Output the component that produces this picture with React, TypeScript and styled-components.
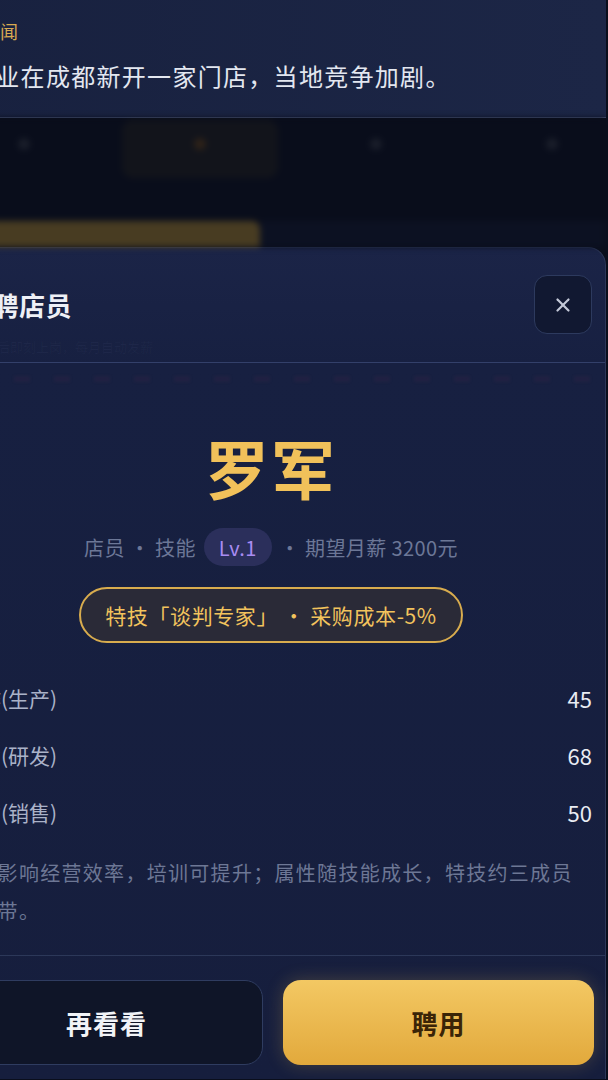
import React from 'react';
import styled, { createGlobalStyle } from 'styled-components';
import { X } from 'lucide-react';

// bottom sheet "招聘店员" over the dimmed game screen
// the phone screenshot is cropped on the left, so the stage is pulled out of view

const Global = createGlobalStyle`
    html, body {
        margin: 0;
        padding: 0;
        background: #0a0e1c;
    }
    body {
        font-family: 'Noto Sans CJK SC', 'Noto Sans', sans-serif;
        -webkit-font-smoothing: antialiased;
    }
`

const Screen = styled.div`
    width: 608px;
    height: 1080px;
    overflow: hidden;
    background: #0a0e1c;
`

const Stage = styled.div`
    margin-left: -64px;
    width: 670px;
`

const News = styled.section`
    height: 118px;
    box-sizing: border-box;
    padding: 20px 0 0 34px;
    background: linear-gradient(90deg, #18213f 0%, #1c2646 100%);
    border-bottom: 1px solid #4a5679;
`

const NewsTag = styled.div`
    margin-left: 12px;
    font-size: 18px;
    line-height: 22px;
    color: #d8aa52;
`

const NewsText = styled.p`
    margin: 20px 0 0;
    font-size: 24px;
    line-height: 28px;
    letter-spacing: 1.3px;
    color: #e3e7f0;
    white-space: nowrap;
`

const Backdrop = styled.div`
    height: 129px;
    box-sizing: border-box;
    padding-top: 2px;
    display: flex;
    flex-direction: column;
    justify-content: space-between;
    background: #090d1b;
    filter: blur(3px);
`

const TabRow = styled.div`
    display: grid;
    grid-template-columns: repeat(4, 176px);
    height: 58px;
`

const Tab = styled.div<{ $active?: boolean }>`
    display: flex;
    align-items: flex-start;
    justify-content: center;
    padding-top: 18px;
    border-radius: 10px;
    background: ${p => (p.$active ? '#12141b' : 'transparent')};
    margin: 0 ${p => (p.$active ? '10px' : '0')};
`

const TabDot = styled.span<{ $warm?: boolean }>`
    width: 12px;
    height: 12px;
    border-radius: 50%;
    background: ${p => (p.$warm ? '#2e2219' : '#1a1e2a')};
`

const BottomRow = styled.div`
    display: grid;
    grid-template-columns: 324px 1fr;
    height: 26px;
`

const GoldBar = styled.div`
    background: #483c22;
    border-radius: 8px 8px 0 0;
`

const DimBar = styled.div`
    background: #0c1122;
`

const Sheet = styled.section`
    height: 832px;
    box-sizing: border-box;
    border: 1px solid #2c3758;
    border-bottom: none;
    border-radius: 18px 18px 0 0;
    background: linear-gradient(180deg, #1b2447 0%, #172041 14%, #161e3d 100%);
`

const SheetHeader = styled.header`
    padding: 27px 13px 6px;
    border-bottom: 1.5px solid #33406a;
`

const HeaderRow = styled.div`
    display: flex;
    align-items: center;
    justify-content: space-between;
    height: 59px;
`

const Title = styled.h2`
    margin: 0 0 0 16px;
    font-size: 26px;
    font-weight: 700;
    color: #eef0f6;
    letter-spacing: 0.5px;
`

const CloseButton = styled.button`
    width: 58px;
    height: 59px;
    display: flex;
    align-items: center;
    justify-content: center;
    padding: 0;
    border-radius: 13px;
    border: 1.5px solid #2d3a5e;
    background: #111831;
    color: #c4c9d8;
    cursor: pointer;
`

const Subtitle = styled.div`
    margin-top: 4px;
    padding-left: 21px;
    font-size: 13px;
    line-height: 18px;
    color: rgba(120, 135, 180, 0.06);
`

const Ticker = styled.div`
    height: 6px;
    margin: 13px 13px 0;
    background: repeating-linear-gradient(90deg, transparent 0 24px, rgba(110, 40, 80, 0.1) 24px 40px);
    filter: blur(1.5px);
`

const Body = styled.div`
    padding: 0 13px;
    display: flex;
    flex-direction: column;
    align-items: center;
`

const Name = styled.h1`
    margin: 48px 0 0;
    font-size: 64px;
    line-height: 72px;
    font-weight: 700;
    color: #f1c15a;
    letter-spacing: 2px;
`

const Meta = styled.div`
    margin-top: 25px;
    height: 40px;
    display: flex;
    align-items: center;
    gap: 8px;
    font-size: 20px;
    letter-spacing: 0.4px;
    color: #6c7797;
`

const LevelPill = styled.span`
    height: 38px;
    display: inline-flex;
    align-items: center;
    padding: 0 15px;
    border-radius: 19px;
    background: #2b2f5b;
    color: #a98cf2;
    font-size: 20px;
`

const PerkPill = styled.div`
    margin-top: 20px;
    height: 56px;
    box-sizing: border-box;
    display: inline-flex;
    align-items: center;
    padding: 0 24px;
    border: 2px solid #d8ac4e;
    border-radius: 28px;
    background: #2a2a37;
    color: #f2c35d;
    font-size: 21px;
    letter-spacing: 0.6px;
    white-space: pre;
`

const StatList = styled.div`
    align-self: stretch;
    margin-top: 26px;
    padding-left: 9px;
`

const StatRow = styled.div`
    height: 57px;
    display: flex;
    align-items: center;
    justify-content: space-between;
`

const StatLabel = styled.span`
    font-size: 21px;
    color: #aab2c8;
    white-space: nowrap;
`

const StatValue = styled.span`
    font-size: 22px;
    color: #e9ecf3;
`

const Note = styled.p`
    align-self: stretch;
    margin: 14px 0 0;
    padding: 0 0 25px 5px;
    font-size: 20px;
    line-height: 38px;
    letter-spacing: 1.3px;
    color: #6d7795;
`

const Footer = styled.footer`
    padding: 24px 13px 0;
    border-top: 1.5px solid #2c3859;
    display: grid;
    grid-template-columns: 313px 311px;
    gap: 20px;
`

const ActionButton = styled.button<{ $primary?: boolean }>`
    height: 85px;
    border-radius: 18px;
    font-family: inherit;
    font-size: 26px;
    font-weight: 700;
    letter-spacing: 1px;
    cursor: pointer;
    border: ${p => (p.$primary ? 'none' : '1.5px solid #2f3c60')};
    background: ${p => (p.$primary ? 'linear-gradient(180deg, #f3c863 0%, #e2a93c 100%)' : '#0f1528')};
    color: ${p => (p.$primary ? '#3a2407' : '#f1f3f7')};
    box-shadow: ${p => (p.$primary ? '0 0 18px rgba(240, 190, 80, 0.22)' : 'none')};
`

const stats = [
    { label: '操作(生产)', value: 45 },
    { label: '创意(研发)', value: 68 },
    { label: '口才(销售)', value: 50 },
];

export default function App() {
    return (
        <>
            <Global />
            <Screen>
                <Stage>
                    <News>
                        <NewsTag>新闻</NewsTag>
                        <NewsText>企业在成都新开一家门店，当地竞争加剧。</NewsText>
                    </News>

                    <Backdrop>
                        <TabRow>
                            <Tab><TabDot /></Tab>
                            <Tab $active><TabDot $warm /></Tab>
                            <Tab><TabDot /></Tab>
                            <Tab><TabDot /></Tab>
                        </TabRow>
                        <BottomRow>
                            <GoldBar />
                            <DimBar />
                        </BottomRow>
                    </Backdrop>

                    <Sheet>
                        <SheetHeader>
                            <HeaderRow>
                                <Title>招聘店员</Title>
                                <CloseButton aria-label="关闭">
                                    <X size={22} strokeWidth={2.4} />
                                </CloseButton>
                            </HeaderRow>
                            <Subtitle>招募后即刻上岗，每月自动发薪</Subtitle>
                        </SheetHeader>
                        <Ticker />

                        <Body>
                            <Name>罗军</Name>
                            <Meta>
                                <span>店员 · 技能</span>
                                <LevelPill>Lv.1</LevelPill>
                                <span>· 期望月薪 3200元</span>
                            </Meta>
                            <PerkPill>特技「谈判专家」 · 采购成本-5%</PerkPill>

                            <StatList>
                                {stats.map(s => (
                                    <StatRow key={s.label}>
                                        <StatLabel>{s.label}</StatLabel>
                                        <StatValue>{s.value}</StatValue>
                                    </StatRow>
                                ))}
                            </StatList>

                            <Note>技能影响经营效率，培训可提升；属性随技能成长，特技约三成员工携带。</Note>
                        </Body>

                        <Footer>
                            <ActionButton>再看看</ActionButton>
                            <ActionButton $primary>聘用</ActionButton>
                        </Footer>
                    </Sheet>
                </Stage>
            </Screen>
        </>
    );
}
